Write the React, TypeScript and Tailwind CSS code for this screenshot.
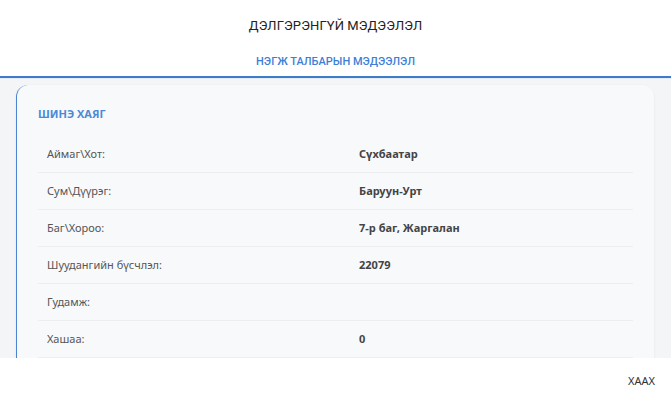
const rows: { label: string; value: string }[] = [
  { label: "Аймаг\\Хот:", value: "Сүхбаатар" },
  { label: "Сум\\Дүүрэг:", value: "Баруун-Урт" },
  { label: "Баг\\Хороо:", value: "7-р баг, Жаргалан" },
  { label: "Шуудангийн бүсчлэл:", value: "22079" },
  { label: "Гудамж:", value: "" },
  { label: "Хашаа:", value: "0" },
];

export default function App() {
  return (
    <div className="w-[671px] h-[402px] bg-white flex flex-col overflow-hidden font-['Noto_Sans','Open_Sans',sans-serif]">
      <div className="h-[50px] flex items-center justify-center pt-[1px]">
        <h2 className="text-[13px] text-[#222] font-['Roboto',sans-serif] tracking-[0.1px]">
          ДЭЛГЭРЭНГҮЙ МЭДЭЭЛЭЛ
        </h2>
      </div>
      <div className="h-[28px] flex items-start justify-center border-b-2 border-[#3f7bc6]">
        <span className="text-[11px] font-medium text-[#3d7fd6] font-['Roboto',sans-serif] leading-[24px]">
          НЭГЖ ТАЛБАРЫН МЭДЭЭЛЭЛ
        </span>
      </div>
      <div className="flex-1 bg-[#f4f5f7] border-t border-[#e3ecf7] overflow-hidden pt-[6px] pl-[16px] pr-[17px]">
        <div className="bg-[#f8f9fb] rounded-xl border-l border-[#4a84d0] shadow-[0_1px_3px_rgba(0,0,0,0.06)] pt-[21px] px-[21px] pb-4">
          <h3 className="text-[11px] font-bold text-[#4a8ad8] leading-[16px] mb-[14px]">
            ШИНЭ ХАЯГ
          </h3>
          <div className="flex flex-col">
            {rows.map((r) => (
              <div
                key={r.label}
                className="grid grid-cols-[312px_1fr] px-[9px] h-[37px] items-center border-b border-[#eceef1] text-[11px]"
              >
                <span className="text-[#555]">{r.label}</span>
                <span className="font-bold text-[#444]">{r.value}</span>
              </div>
            ))}
          </div>
        </div>
      </div>
      <div className="h-[44px] flex items-center justify-end pr-[16px] pt-[2px]">
        <button className="text-[11px] text-[#333]">ХААХ</button>
      </div>
    </div>
  );
}
